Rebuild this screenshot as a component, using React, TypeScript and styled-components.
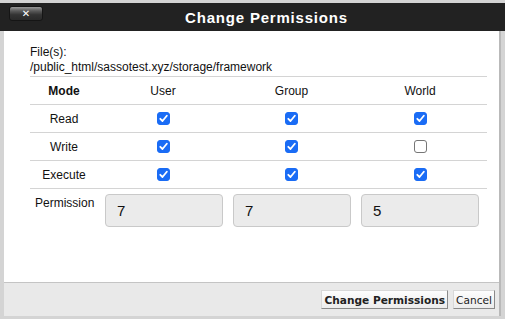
import styled, { createGlobalStyle } from "styled-components";

const GlobalStyle = createGlobalStyle`
  html, body {
    margin: 0;
    padding: 0;
    background: #d4d4d4;
    font-family: "Liberation Sans", Arial, sans-serif;
  }
`;

type Perm = { label: string; user: boolean; group: boolean; world: boolean };

const rows: Perm[] = [
  { label: "Read", user: true, group: true, world: true },
  { label: "Write", user: true, group: true, world: false },
  { label: "Execute", user: true, group: true, world: true },
];

function Check({ checked }: { checked: boolean }) {
  return (
    <Box $checked={checked}>
      {checked && (
        <svg width="9" height="9" viewBox="0 0 9 9">
          <path
            d="M1.3 4.8 L3.5 7 L7.8 1.8"
            fill="none"
            stroke="#fff"
            strokeWidth="1.8"
            strokeLinecap="round"
            strokeLinejoin="round"
          />
        </svg>
      )}
    </Box>
  );
}

export default function App() {
  return (
    <>
      <GlobalStyle />
      <Dialog>
        <TitleBar>
          <CloseButton>✕</CloseButton>
          <Title>Change Permissions</Title>
        </TitleBar>
        <Body>
          <Content>
            <FileLabel>File(s):</FileLabel>
            <FilePath>/public_html/sassotest.xyz/storage/framework</FilePath>
            <Table>
              <Row>
                <ModeCell $bold>Mode</ModeCell>
                <Cell>User</Cell>
                <Cell>Group</Cell>
                <Cell>World</Cell>
              </Row>
              {rows.map((r) => (
                <Row key={r.label}>
                  <ModeCell>{r.label}</ModeCell>
                  <Cell>
                    <Check checked={r.user} />
                  </Cell>
                  <Cell>
                    <Check checked={r.group} />
                  </Cell>
                  <Cell>
                    <Check checked={r.world} />
                  </Cell>
                </Row>
              ))}
            </Table>
            <PermRow>
              <PermLabel>Permission</PermLabel>
              <Inputs>
                <PermInput>7</PermInput>
                <PermInput>7</PermInput>
                <PermInput>5</PermInput>
              </Inputs>
            </PermRow>
          </Content>
          <Footer>
            <Button $primary>Change Permissions</Button>
            <Button>Cancel</Button>
          </Footer>
        </Body>
      </Dialog>
    </>
  );
}

const Dialog = styled.div`
  width: 505px;
  height: 319px;
  padding-top: 3px;
  box-sizing: border-box;
  display: flex;
  flex-direction: column;
`;

const TitleBar = styled.div`
  height: 28px;
  background: #222222;
  display: flex;
  align-items: center;
  position: relative;
`;

const CloseButton = styled.div`
  position: absolute;
  left: 9px;
  top: 3px;
  width: 34px;
  height: 15px;
  box-sizing: border-box;
  border-radius: 3px;
  border: 1px solid #151515;
  background: linear-gradient(#9a9a9a 0%, #5a5a5a 30%, #333 60%, #2a2a2a 100%);
  color: #fff;
  font-family: "DejaVu Sans", sans-serif;
  font-weight: bold;
  font-size: 10px;
  display: flex;
  align-items: center;
  justify-content: center;
`;

const Title = styled.div`
  flex: 1;
  text-align: center;
  color: #fff;
  font-weight: bold;
  font-size: 15px;
  letter-spacing: 0.8px;
  padding-left: 28px;
`;

const Body = styled.div`
  flex: 1;
  margin: 0 4px 3px 4px;
  background: #fff;
  display: flex;
  flex-direction: column;
  border-right: 2px solid #b9b9b9;
`;

const Content = styled.div`
  flex: 1;
  padding: 14px 12px 0 26px;
  color: #111;
`;

const FileLabel = styled.div`
  font-size: 12px;
  line-height: 15px;
`;

const FilePath = styled.div`
  font-size: 12px;
  line-height: 15px;
`;

const Table = styled.div`
  margin-top: 1px;
  border-top: 1px solid #d4d4d4;
`;

const Row = styled.div`
  display: grid;
  grid-template-columns: 68px 130px 127px 130px;
  height: 27px;
  border-bottom: 1px solid #d4d4d4;
  align-items: center;
  font-size: 12px;
`;

const Cell = styled.div`
  display: flex;
  justify-content: center;
  align-items: center;
`;

const ModeCell = styled(Cell)<{ $bold?: boolean }>`
  font-weight: ${(p) => (p.$bold ? "bold" : "normal")};
`;

const Box = styled.span<{ $checked: boolean }>`
  width: 13px;
  height: 13px;
  box-sizing: border-box;
  border-radius: 3px;
  display: flex;
  align-items: center;
  justify-content: center;
  background: ${(p) => (p.$checked ? "#1a6cf5" : "#fff")};
  border: 1px solid ${(p) => (p.$checked ? "#1a6cf5" : "#767676")};
`;

const PermRow = styled.div`
  display: flex;
  align-items: flex-start;
  margin-top: 5px;
  padding-left: 5px;
`;

const PermLabel = styled.div`
  font-size: 12px;
  width: 70px;
  padding-top: 2px;
`;

const Inputs = styled.div`
  display: flex;
  gap: 10px;
`;

const PermInput = styled.div`
  width: 118px;
  height: 33px;
  box-sizing: border-box;
  border: 1px solid #c9c9c9;
  border-radius: 4px;
  background: #ebebeb;
  font-size: 15px;
  padding-left: 11px;
  display: flex;
  align-items: center;
`;

const Footer = styled.div`
  height: 33px;
  border-top: 1px solid #c4c4c4;
  background: #e9e9e9;
  display: flex;
  justify-content: flex-end;
  align-items: center;
  gap: 5px;
  padding-right: 4px;
`;

const Button = styled.div<{ $primary?: boolean }>`
  height: 19px;
  box-sizing: border-box;
  padding: 0 2px;
  display: flex;
  align-items: center;
  font-family: "DejaVu Sans", Verdana, sans-serif;
  font-size: 10.6px;
  font-weight: ${(p) => (p.$primary ? "bold" : "normal")};
  color: #222;
  background: linear-gradient(#fdfdfd, #ececec);
  border: 1px solid #d8d8d8;
  border-right-color: #8a8a8a;
  border-bottom-color: #8a8a8a;
`;
